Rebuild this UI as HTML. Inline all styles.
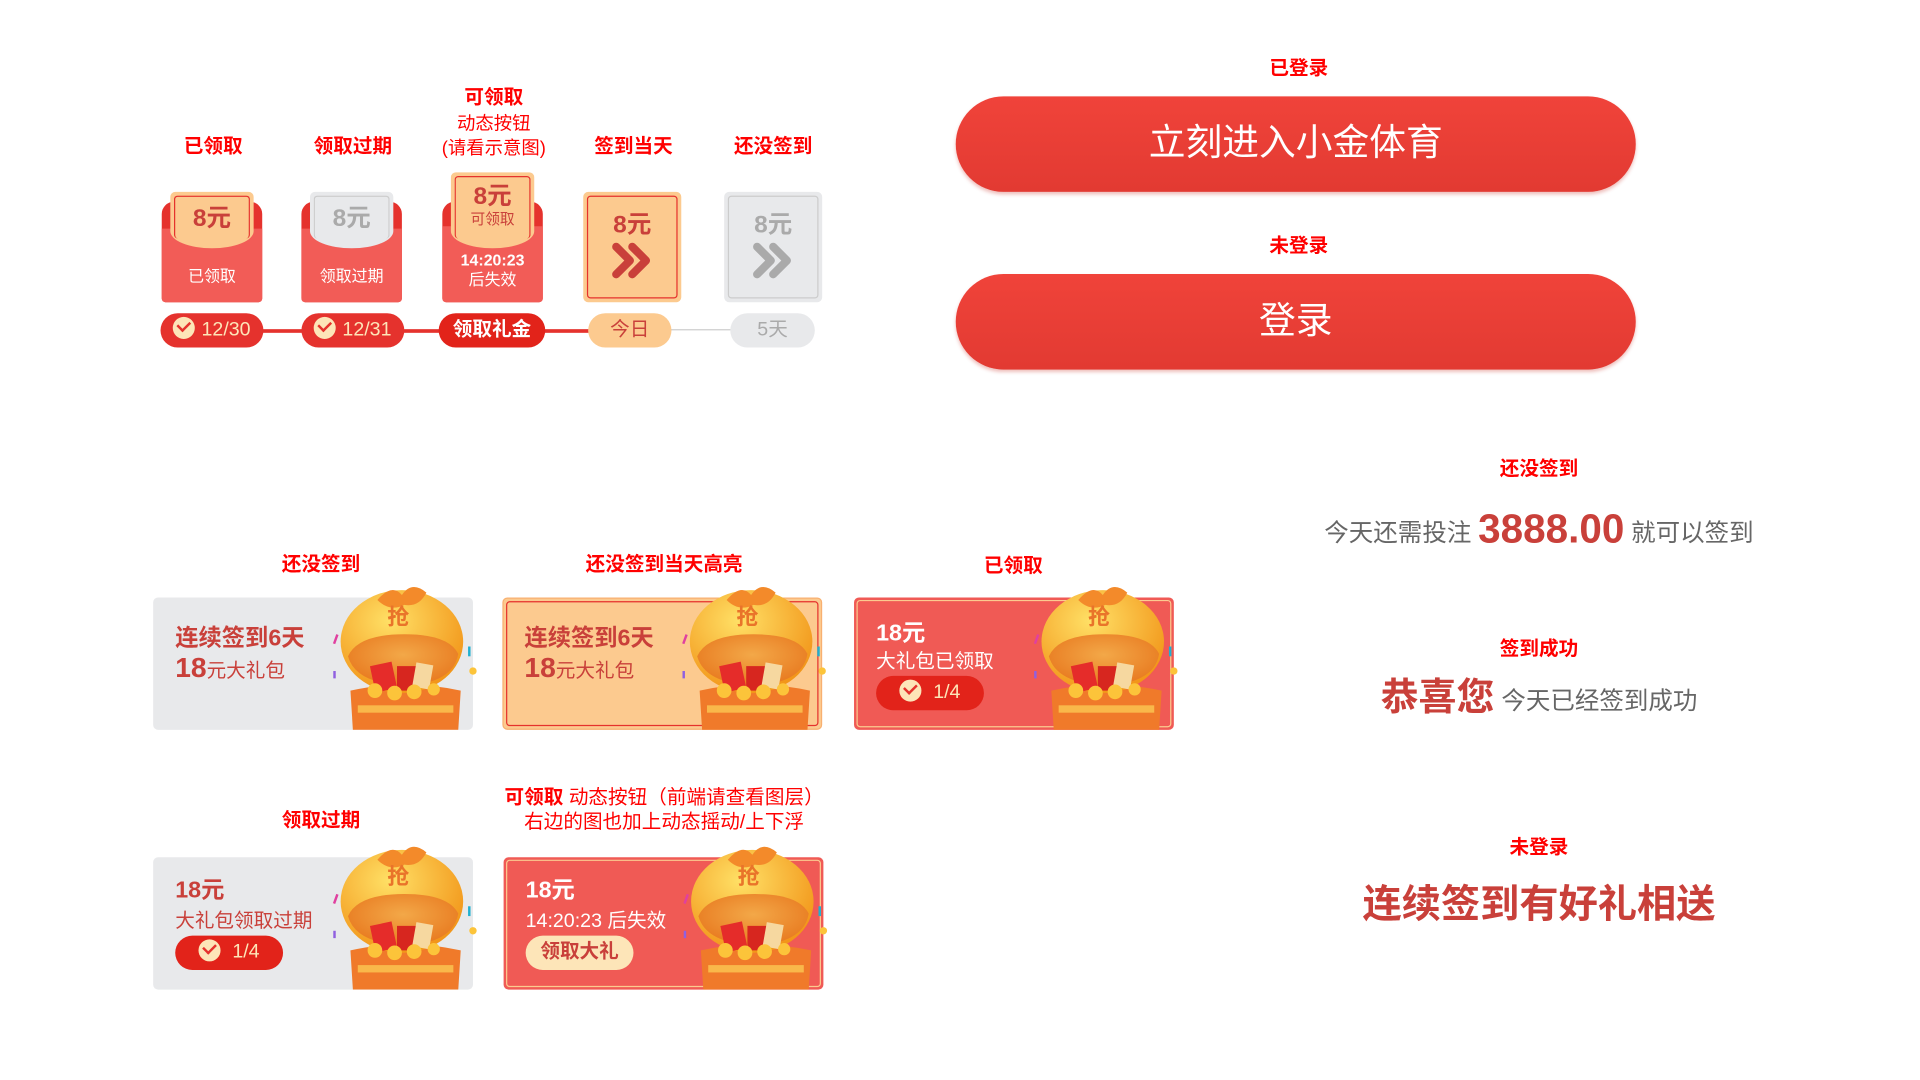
<!DOCTYPE html>
<html><head><meta charset="utf-8"><style>
*{margin:0;padding:0;box-sizing:border-box}
html,body{width:1920px;height:1080px;background:#fff;overflow:hidden}
body{font-family:"Liberation Sans","Noto Sans CJK SC",sans-serif}
#s{position:absolute;left:0;top:2px;width:1560px;height:878px;transform:scale(1.2253);transform-origin:0 0}
.a{position:absolute}
.c{position:absolute;transform:translateX(-50%);white-space:nowrap;text-align:center}
.lb{color:#f00;font-weight:bold;font-size:16px;line-height:20px}
.env{position:absolute;top:155px;width:82px;height:90px}
.env .back{position:absolute;left:0;right:0;top:8px;bottom:0;background:#e5322d;border-radius:10px 10px 3px 3px}
.env .card{position:absolute;left:7px;right:7px;top:0;height:46px;background:#fcca8f;border-radius:4px 4px 50% 50%/4px 4px 14px 14px;text-align:center;color:#c9403a;font-weight:bold;font-size:20px;line-height:44px;z-index:2}
.env .card:before{content:"";position:absolute;left:3px;right:3px;top:3px;bottom:8px;border:1px solid #e5322d;border-bottom:none;border-radius:3px}
.env .front{position:absolute;left:0;right:0;top:30px;bottom:0;background:#f25c57;border-radius:0 0 3px 3px;color:#fff;font-size:13px;text-align:center}
.env.g .card{background:#e8e9eb;color:#aaa}
.env.g .card:before{border-color:#ccc}
.sq{position:absolute;top:155px;width:80px;height:90px;border-radius:4px;padding:3px}
.sq>div{width:100%;height:100%;border:1px solid #e5322d;border-radius:3px;text-align:center;font-weight:bold;font-size:20px;color:#c9403a;padding-top:6px}
.pill{position:absolute;top:254px;height:28px;border-radius:14px;font-size:16px;line-height:28px;text-align:center}
.ck{display:inline-block;width:18px;height:18px;border-radius:50%;background:#fde5b8;vertical-align:-3px;margin-right:5px;position:relative}
.ck:after{content:"";position:absolute;left:4px;top:3px;width:8px;height:5px;border-left:2.5px solid #e5322d;border-bottom:2.5px solid #e5322d;transform:rotate(-45deg)}
.btn{position:absolute;left:780px;width:555px;height:78px;border-radius:39px;background:linear-gradient(#f0433a,#e23a32);color:#fff;font-size:30px;line-height:78px;text-align:center;box-shadow:0 2px 3px rgba(200,40,30,.3)}
.bc{position:absolute;width:261px;height:108px;border-radius:4px;overflow:visible}
.bc .bg{position:absolute;inset:0;border-radius:4px;overflow:hidden}
.bc svg.gift{position:absolute;left:145px;top:-10px;width:122px;height:118px}
.bc .t{position:absolute;left:18px;color:#c9403a;font-weight:bold}
</style></head><body>
<svg width="0" height="0" style="position:absolute"><defs>
<radialGradient id="gg" cx="40%" cy="30%" r="70%"><stop offset="0" stop-color="#ffe066"/><stop offset="1" stop-color="#f2961a"/></radialGradient>
<radialGradient id="go" cx="50%" cy="40%" r="60%"><stop offset="0" stop-color="#f3a848"/><stop offset="1" stop-color="#e87a20"/></radialGradient>
<symbol id="gift" viewBox="0 0 122 118">
<path d="M16 86 Q60 76 106 86 L104 118 L18 118Z" fill="#f07a2a"/>
<rect x="22" y="98" width="78" height="6" fill="#f9b84a"/>
<ellipse cx="58" cy="46" rx="50" ry="42" fill="url(#gg)"/>
<path d="M14 58 Q20 80 60 82 Q100 80 104 56 Q96 40 60 40 Q22 40 14 58Z" fill="url(#go)"/>
<rect x="34" y="64" width="18" height="22" fill="#e52c2a" transform="rotate(-12 43 75)"/>
<rect x="54" y="66" width="16" height="20" fill="#d7261f"/>
<rect x="68" y="64" width="14" height="20" fill="#f6d8a0" transform="rotate(10 75 74)"/>
<circle cx="36" cy="86" r="6" fill="#fcc43a"/><circle cx="52" cy="88" r="6" fill="#fcc43a"/><circle cx="68" cy="87" r="6" fill="#fcc43a"/><circle cx="84" cy="85" r="5" fill="#fcc43a"/>
<path d="M38 12 Q50 -2 58 8 Q66 -4 78 6 Q72 18 60 16 Q48 22 38 12Z" fill="#f38a2a"/>
<text x="46" y="32" font-size="18" font-weight="bold" fill="#e9742a" font-family="Noto Sans CJK SC,sans-serif">抢</text>
<rect x="3" y="40" width="2" height="8" fill="#e040a0" transform="rotate(20 4 44)"/><rect x="112" y="50" width="2" height="8" fill="#20b0d0"/><circle cx="116" cy="70" r="3" fill="#fcc43a"/><rect x="2" y="70" width="2" height="6" fill="#9060e0"/>
</symbol>
<symbol id="chev" viewBox="0 0 36 32"><path d="M4 4 L16 16 L4 28 M18 4 L30 16 L18 28" fill="none" stroke="currentColor" stroke-width="7" stroke-linecap="round" stroke-linejoin="round"/></symbol>
</defs></svg>
<div id="s">
<div class="c lb" style="left:174px;top:109px">已领取</div>
<div class="c lb" style="left:288px;top:109px">领取过期</div>
<div class="c lb" style="left:403px;top:69px">可领取</div>
<div class="c" style="left:403px;top:90px;color:#f00;font-size:15px;line-height:20px">动态按钮<br>(请看示意图)</div>
<div class="c lb" style="left:517px;top:109px">签到当天</div>
<div class="c lb" style="left:631px;top:109px">还没签到</div>

<div class="env" style="left:132px"><div class="back"></div><div class="card">8元</div><div class="front"><div style="padding-top:28px">已领取</div></div></div>
<div class="env g" style="left:246px"><div class="back"></div><div class="card">8元</div><div class="front"><div style="padding-top:28px">领取过期</div></div></div>
<div class="env" style="left:361px;top:139px;height:106px"><div class="back" style="top:24px"></div><div class="card" style="height:62px;line-height:40px">8元<div style="font-size:12px;font-weight:normal;line-height:12px;margin-top:-8px">可领取</div></div><div class="front" style="top:44px"><div style="padding-top:20px;font-weight:bold;font-size:13px;line-height:16px">14:20:23<br><span style="font-weight:normal">后失效</span></div></div></div>
<div class="sq" style="left:476px;background:#fcca8f"><div>8元<br><svg width="34" height="30" style="color:#c9403a;margin-top:2px"><use href="#chev"/></svg></div></div>
<div class="sq" style="left:591px;background:#e8e9eb"><div style="border-color:#ccc;color:#aaa">8元<br><svg width="34" height="30" style="color:#aaa;margin-top:2px"><use href="#chev"/></svg></div></div>

<div class="a" style="left:200px;top:267px;width:300px;height:3px;background:#e5322d"></div>
<div class="a" style="left:540px;top:267px;width:80px;height:1px;background:#ccc"></div>
<div class="pill" style="left:131px;width:84px;background:#e5322d;color:#fde5b8"><span class="ck"></span>12/30</div>
<div class="pill" style="left:246px;width:84px;background:#e5322d;color:#fde5b8"><span class="ck"></span>12/31</div>
<div class="pill" style="left:358px;width:87px;background:#e2231a;color:#fff;font-weight:bold">领取礼金</div>
<div class="pill" style="left:480px;width:68px;background:#fcca8f;color:#c9403a">今日</div>
<div class="pill" style="left:596px;width:69px;background:#e8e9eb;color:#aaa">5天</div>

<div class="c lb" style="left:1060px;top:45px">已登录</div>
<div class="btn" style="top:77px">立刻进入小金体育</div>
<div class="c lb" style="left:1060px;top:190px">未登录</div>
<div class="btn" style="top:222px">登录</div>

<div class="c lb" style="left:1256px;top:372px">还没签到</div>
<div class="c" style="left:1256px;top:408px;color:#666;font-size:20px;line-height:44px">今天还需投注 <span style="color:#c9403a;font-weight:bold;font-size:33px;vertical-align:-1px">3888.00</span> 就可以签到</div>
<div class="c lb" style="left:1256px;top:519px">签到成功</div>
<div class="c" style="left:1256px;top:548px;color:#666;font-size:20px;line-height:40px"><span style="color:#c9403a;font-weight:bold;font-size:31px;vertical-align:-1px">恭喜您</span> 今天已经签到成功</div>
<div class="c lb" style="left:1256px;top:681px">未登录</div>
<div class="c" style="left:1256px;top:714px;color:#c9403a;font-weight:bold;font-size:32px;line-height:44px">连续签到有好礼相送</div>

<div class="c lb" style="left:262px;top:450px">还没签到</div>
<div class="c lb" style="left:542px;top:450px">还没签到当天高亮</div>
<div class="c lb" style="left:827px;top:451px">已领取</div>

<div class="bc" style="left:125px;top:486px"><div class="bg" style="background:#e8e9eb"></div><svg class="gift"><use href="#gift"/></svg>
<div class="t" style="top:18px;font-size:19px">连续签到6天</div><div class="t" style="top:44px;font-size:23px">18<span style="font-size:16px;font-weight:normal">元大礼包</span></div></div>

<div class="bc" style="left:410px;top:486px"><div class="bg" style="background:#fcca8f;border:1px solid #f8b070"><div style="position:absolute;inset:2px;border:1px solid #e5322d;border-radius:3px"></div></div><svg class="gift"><use href="#gift"/></svg>
<div class="t" style="top:18px;font-size:19px">连续签到6天</div><div class="t" style="top:44px;font-size:23px">18<span style="font-size:16px;font-weight:normal">元大礼包</span></div></div>

<div class="bc" style="left:697px;top:486px"><div class="bg" style="background:#f05a55"><div style="position:absolute;inset:2px;border:1px solid #fcca8f;border-radius:3px"></div></div><svg class="gift"><use href="#gift"/></svg>
<div class="t" style="top:14px;font-size:19px;color:#fff">18元</div><div class="t" style="top:38px;font-size:16px;color:#fff;font-weight:normal">大礼包已领取</div>
<div class="pill" style="left:18px;top:64px;width:88px;background:#e2231a;color:#fde5b8"><span class="ck"></span> 1/4</div></div>

<div class="c lb" style="left:262px;top:659px">领取过期</div>
<div class="c" style="left:542px;top:640px;color:#f00;font-size:16px;line-height:20px"><b>可领取</b> 动态按钮（前端请查看图层）<br>右边的图也加上动态摇动/上下浮</div>

<div class="bc" style="left:125px;top:698px"><div class="bg" style="background:#e8e9eb"></div><svg class="gift"><use href="#gift"/></svg>
<div class="t" style="top:12px;font-size:19px">18元</div><div class="t" style="top:38px;font-size:16px;font-weight:normal">大礼包领取过期</div>
<div class="pill" style="left:18px;top:64px;width:88px;background:#e2231a;color:#fde5b8"><span class="ck"></span> 1/4</div></div>

<div class="bc" style="left:411px;top:698px"><div class="bg" style="background:#f05a55"><div style="position:absolute;inset:2px;border:1px solid #fcca8f;border-radius:3px"></div></div><svg class="gift"><use href="#gift"/></svg>
<div class="t" style="top:12px;font-size:19px;color:#fff">18元</div><div class="t" style="top:38px;font-size:16px;color:#fff;font-weight:normal">14:20:23 后失效</div>
<div class="pill" style="left:18px;top:64px;width:88px;background:#fde5b8;color:#c9403a;font-weight:bold">领取大礼</div></div>
</div>
</body></html>
